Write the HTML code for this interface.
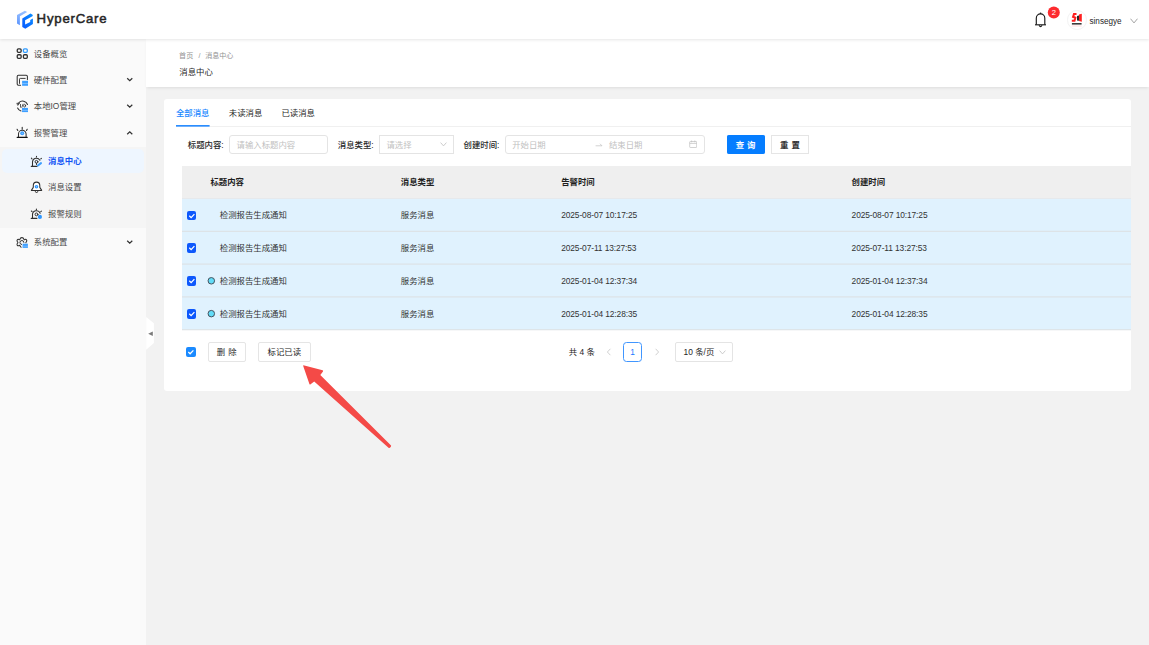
<!DOCTYPE html>
<html lang="zh-CN">
<head>
<meta charset="utf-8">
<title>消息中心 - HyperCare</title>
<style>
*{box-sizing:border-box;margin:0;padding:0}
html,body{width:1149px;height:645px;overflow:hidden}
body{position:relative;background:#f2f2f2;font-family:"Liberation Sans","Noto Sans CJK SC",sans-serif;font-size:8.4px;color:#262626;-webkit-font-smoothing:antialiased}
.abs{position:absolute}
.t{position:absolute;white-space:nowrap;line-height:12px;height:12px}
/* header */
#hdr{left:0;top:0;width:1149px;height:39px;background:#fff;box-shadow:0 1px 3px rgba(0,0,0,.1);z-index:5}
#brand{left:36.6px;top:9.9px;font-size:13.2px;font-weight:400;-webkit-text-stroke:.5px #262626;line-height:18px;height:18px;letter-spacing:.78px;color:#262626}
/* sidebar */
#side{left:0;top:39px;width:146px;height:606px;background:#fafafa}
#sub{left:0;top:147px;width:146px;height:81px;background:#f5f5f5}
#sel{left:2.4px;top:149.2px;width:141.4px;height:24.3px;background:#eef6ff;border-radius:5px}
.mi{color:#484848}
.chev{position:absolute;width:8px;height:8px}
/* page header */
#ph{left:146px;top:39px;width:1003px;height:48px;background:#fff;box-shadow:0 2px 3px -1px rgba(0,0,0,.09)}
/* card */
#card{left:164px;top:99px;width:967px;height:292px;background:#fff;border-radius:3px}
.inp{position:absolute;border:1px solid #e4e4e4;background:#fff;height:18.6px;top:135.2px}
.ph{color:#bfbfbf}
.lbl{color:#262626;font-weight:500}
.btn{position:absolute;border:1px solid #e5e5e5;background:#fff;height:19.4px;text-align:center;line-height:18.8px;color:#262626}
/* table */
#th{left:182px;top:166px;width:949px;height:32.5px;background:#efefef}
.th{font-weight:700;color:#1f1f1f}
.row{position:absolute;left:182px;width:949px;height:32.85px;background:#e0f2fe;border-bottom:1px solid #e3e6e8}
.cb{position:absolute;width:9.6px;height:9.6px;border-radius:2px;background:#0d58fc}
.cb svg{position:absolute;left:0;top:0;width:100%;height:100%}
.dot{position:absolute;width:7.6px;height:7.6px;border-radius:50%;background:#62d9f5;border:1px solid #4a5560}
.td{color:#333}
</style>
</head>
<body>

<!-- HEADER -->
<div id="hdr" class="abs">
  <svg class="abs" style="left:0;top:0" width="40" height="40" viewBox="0 0 40 40">
    <defs>
      <linearGradient id="lg1" x1="0" y1="0" x2="0" y2="1"><stop offset="0" stop-color="#9cc2ff"/><stop offset="1" stop-color="#5a94ff"/></linearGradient>
      <linearGradient id="lg2" x1="1" y1="0" x2="0" y2="1"><stop offset="0" stop-color="#0a90ff"/><stop offset="1" stop-color="#0a58ff"/></linearGradient>
    </defs>
    <path d="M17 15 L24.9 10.7 L27.2 12 L19.9 16.2 L19.9 25.2 L17 23.6 Z" fill="url(#lg1)"/>
    <path d="M22.3 18.5 L30.5 13.4 L32.9 14.9 L32.4 16.2 L25.1 20.2 L25.1 24.5 L30.2 22 L30.2 19.9 L32.9 18.5 L32.9 24.1 L25.3 28.7 L22.3 26.9 Z" fill="url(#lg2)"/>
  </svg>
  <div id="brand" class="t">HyperCare</div>

  <!-- bell -->
  <svg class="abs" style="left:1030px;top:8px" width="20" height="22" viewBox="1030 8 20 22" fill="none" stroke="#1c1c1c" stroke-width="1.15">
    <path d="M1036.3 24.8 L1036.3 18.2 A4.25 4.3 0 0 1 1044.8 18.2 L1044.8 24.8"/>
    <path d="M1035 24.8 L1046 24.8"/>
    <path d="M1040.55 12.6 L1040.55 14" stroke-width="1.3"/>
    <path d="M1039 25.2 Q1040.55 28 1042.1 25.2" stroke-width="1.05"/>
  </svg>
  <svg class="abs" style="left:1046px;top:4px" width="16" height="16" viewBox="1046 4 16 16">
    <circle cx="1053.8" cy="12.4" r="6" fill="#fd2b2f"/>
    <text x="1053.8" y="15.1" text-anchor="middle" font-family="Liberation Sans, sans-serif" font-size="7.6" fill="#fff">2</text>
  </svg>
  <!-- avatar -->
  <div class="abs" style="left:1067.2px;top:10.2px;width:19.4px;height:19.4px;border-radius:50%;background:#fff;border:.6px solid #f3f3f3"></div>
  <svg class="abs" style="left:1064px;top:6px" width="28" height="28" viewBox="1064 6 28 28">
    <path d="M1076.5 14 L1074 14 L1073.1 16.8 L1075.3 17.7 L1074.5 20.7 L1071.8 20.7" fill="none" stroke="#ff1f1f" stroke-width="2.1" stroke-linejoin="miter"/>
    <path d="M1077 16 L1079 15.6 L1079 20.8 L1077 20.4 Z" fill="#2a2a2a"/>
    <path d="M1079 14.4 L1081.8 13.8 L1081.8 21.8 L1079 21 Z" fill="#ff1f1f"/>
    <rect x="1071.9" y="23" width="9.7" height="1.6" fill="#3a3a3a"/>
    <rect x="1071.7" y="25.5" width="10" height="1" fill="#ff1f1f" opacity=".16"/>
  </svg>
  <div class="t" style="left:1089.5px;top:16px;font-size:8.15px;color:#262626">sinsegye</div>
  <svg class="abs" style="left:1130px;top:17.9px" width="8" height="6" viewBox="0 0 8 6"><path d="M.5 .7 L4 4.9 L7.5 .7" fill="none" stroke="#8c8c8c" stroke-width=".8"/></svg>
</div>

<!-- SIDEBAR -->
<div id="side" class="abs"></div>
<div id="sub" class="abs"></div>
<div id="sel" class="abs"></div>

<!-- menu icons -->
<!-- 设备概览 -->
<div class="t mi" style="left:33.8px;top:47.6px">设备概览</div>

<!-- 硬件配置 -->
<div class="t mi" style="left:33.8px;top:74px">硬件配置</div>

<!-- 本地IO管理 -->
<div class="t mi" style="left:33.8px;top:100.2px">本地IO管理</div>

<!-- 报警管理 -->
<div class="t mi" style="left:33.8px;top:126.7px">报警管理</div>

<!-- 消息中心 (selected) -->
<div class="t" style="left:48.1px;top:155.1px;color:#1456f5;font-weight:700">消息中心</div>

<!-- 消息设置 -->
<div class="t mi" style="left:48.1px;top:181.3px">消息设置</div>

<!-- 报警规则 -->
<div class="t mi" style="left:48.1px;top:207.5px">报警规则</div>

<!-- 系统配置 -->
<div class="t mi" style="left:33.8px;top:236.4px">系统配置</div>

<svg class="abs" style="left:0;top:40px" width="146" height="220" viewBox="0 40 146 220" fill="none" stroke="#303030" stroke-width="1.05" stroke-linecap="round" stroke-linejoin="round">
  <!-- 设备概览 -->
  <g stroke-width="1.3" stroke-linecap="butt">
    <rect x="17.25" y="48.85" width="3.9" height="3.6" rx="1.1"/>
    <rect x="23.4" y="48.85" width="3.9" height="3.6" rx="1.1" stroke="#2f9bff"/>
    <rect x="17.25" y="54.75" width="3.9" height="3.6" rx="1.1"/>
    <rect x="23.4" y="54.75" width="3.9" height="3.6" rx="1.1"/>
  </g>
  <!-- 硬件配置 -->
  <path d="M20.6 85.2 L18.4 85.2 Q17.2 85.2 17.2 84 L17.2 76.5 Q17.2 75.3 18.4 75.3 L26.2 75.3 Q27.4 75.3 27.4 76.5 L27.4 79.6"/>
  <path d="M25.2 78.4 L20.3 78.4 Q19.5 78.4 19.5 79.2 L19.5 83.4" stroke-width=".95"/>
  <rect x="22.1" y="80.8" width="5.9" height="5" fill="#3d9fff" stroke="none"/>
  <path d="M22.1 83.5 L28 83.5" stroke="#a9d3ff" stroke-width=".55" stroke-linecap="butt"/>
  <!-- 本地IO管理 -->
  <path d="M18.9 102.6 A5.2 5.2 0 0 1 27.5 104.5"/>
  <path d="M17.6 108 A5.2 5.2 0 0 0 21 110.9"/>
  <path d="M17.1 103.2 L19.6 103.2 L18 105.2 Z" fill="#2b2b2b" stroke-width=".6"/>
  <path d="M20.5 104.4 L20.5 107.2 M21.8 107.4 L23 104.2" stroke-width=".8"/>
  <ellipse cx="24.6" cy="105.7" rx="1" ry="1.4" stroke-width=".8"/>
  <rect x="22" y="107.9" width="6" height="4.2" fill="#3d9fff" stroke="none"/>
  <path d="M22 110.4 L28 110.4" stroke="#a9d3ff" stroke-width=".55" stroke-linecap="butt"/>
  <!-- 报警管理 -->
  <path d="M22.2 127.3 L22.2 129.2 M17.1 129.3 L17.8 130.5 M27.2 129.3 L26.5 130.5" stroke-width="1.1"/>
  <path d="M18.5 137 L18.5 134 A3.8 3.8 0 0 1 26.1 134 L26.1 137"/>
  <path d="M17.2 137.3 L27.2 137.3" stroke="#111" stroke-width="1.3"/>
  <circle cx="22.2" cy="133.3" r="2" fill="#3d9fff" stroke="none"/>
  <circle cx="22.2" cy="133.3" r=".5" fill="#bfe0ff" stroke="none"/>
  <!-- 消息中心 -->
  <path d="M36.5 156.4 L36.5 156.9 M31.4 158.2 L32 158.8 M41.4 158.3 L40.8 158.9" stroke-width="1.1"/>
  <path d="M32.5 166 L32.5 161.8 A4 4 0 0 1 39.9 160.2"/>
  <path d="M31.3 166.3 L37 166.3" stroke-width="1.25"/>
  <circle cx="36.5" cy="161.8" r="1.4" stroke-width="1"/>
  <path d="M36.5 163.2 L36.5 164.6" stroke-width=".9"/>
  <path d="M37.9 165.5 L41 163.1" stroke="#3d9fff" stroke-width="2"/>
  <!-- 消息设置 -->
  <path d="M33.2 190.3 L33.2 185.6 A3.3 3.5 0 0 1 39.8 185.6 L39.8 190.3 Z" fill="#fff" stroke="none"/>
  <path d="M31.4 190.4 L33.3 187.4 L33.3 185.6 A3.25 3.5 0 0 1 39.8 185.6 L39.8 187.4 L41.7 190.4 Z"/>
  <path d="M35.4 191 L35.4 191.6 Q35.4 192.5 36.55 192.5 Q37.7 192.5 37.7 191.6 L37.7 191" stroke-width="1"/>
  <circle cx="36.5" cy="186.7" r="1.8" fill="#2f97ff" stroke="none"/>
  <circle cx="36.5" cy="186.7" r=".5" fill="#d6ebff" stroke="none"/>
  <!-- 报警规则 -->
  <path d="M36.4 209.1 L36.4 209.8 M31.4 211 L32 211.5 M41.4 211.1 L40.8 211.6" stroke-width="1.1"/>
  <path d="M32.5 218 L32.5 214.8 A4 4 0 0 1 40.2 213.2"/>
  <path d="M31.3 218.4 L36.8 218.4" stroke-width="1.25"/>
  <circle cx="36.5" cy="214.4" r="1.4" stroke-width="1"/>
  <circle cx="39.9" cy="216.9" r="2.1" fill="#2f97ff" stroke="none"/>
  <!-- 系统配置 -->
  <path d="M21.2 247.2 Q20.2 246.9 20 245.9 Q19.8 245 18.9 245.6 Q17.9 246.2 17.2 245.1 Q16.6 244.1 17.5 243.4 Q18.3 242.6 17.5 241.8 Q16.6 241.1 17.2 240 Q17.9 238.9 18.9 239.5 Q19.8 240 20 239.1 Q20.3 237.6 21.9 237.6 Q23.5 237.6 23.8 239.1 Q24 240 24.9 239.5 Q25.9 238.9 26.6 240 Q27.2 241.1 26.3 241.8 Q25.8 242.3 25.9 242.8"/>
  <path d="M21.6 244.5 A2 2 0 1 1 23.9 242.4" stroke-width="1"/>
  <rect x="22.6" y="243.7" width="5.3" height="4.2" fill="#3d9fff" stroke="none"/>
  <path d="M22.6 246.2 L27.9 246.2" stroke="#a9d3ff" stroke-width=".55" stroke-linecap="butt"/>
  <!-- chevrons -->
  <g stroke="#333" stroke-width="1.25" stroke-linecap="butt" stroke-linejoin="miter">
    <path d="M127.2 78.2 L129.75 80.6 L132.3 78.2"/>
    <path d="M127.2 104.7 L129.75 107.1 L132.3 104.7"/>
    <path d="M127.2 134.2 L129.75 131.8 L132.3 134.2"/>
    <path d="M127.2 240.7 L129.75 243.1 L132.3 240.7"/>
  </g>
</svg>
<!-- collapse handle -->
<svg class="abs" style="left:146px;top:316px;z-index:3" width="9" height="35" viewBox="146 316 9 35">
  <path d="M146.2 316.9 L153.9 323.3 L153.9 343 L146.2 349.8 Z" fill="#fff"/>
  <path d="M152.8 331.4 L148.2 333.8 L152.8 336.1 Z" fill="#7a7a7a"/>
</svg>

<!-- PAGE HEADER -->
<div id="ph" class="abs"></div>
<div class="t" style="left:179.1px;top:50.2px;font-size:7.05px;color:#939393">首页<span style="margin:0 4.6px 0 5.4px">/</span>消息中心</div>
<div class="t" style="left:179.3px;top:65.5px;font-size:8.4px;color:#1f1f1f">消息中心</div>

<!-- CARD -->
<div id="card" class="abs"></div>
<!-- tabs -->
<div class="abs" style="left:176px;top:126.4px;width:955px;height:1px;background:#f0f0f0"></div>
<div class="t" style="left:176px;top:107px;color:#2087ff;font-weight:500">全部消息</div>
<div class="t" style="left:228.8px;top:107px;color:#1f1f1f">未读消息</div>
<div class="t" style="left:281.4px;top:107px;color:#1f1f1f">已读消息</div>
<svg class="abs" style="left:176px;top:124px" width="34" height="4" viewBox="0 0 34 4"><rect x="0" y="1" width="33.6" height="1.65" fill="#2a8dff"/></svg>

<!-- filters -->
<div class="t lbl" style="left:187.8px;top:138.5px">标题内容:</div>
<div class="inp" style="left:229.3px;width:98.4px;border-radius:3px"></div>
<div class="t ph" style="left:236.6px;top:138.5px">请输入标题内容</div>

<div class="t lbl" style="left:337.8px;top:138.5px">消息类型:</div>
<div class="inp" style="left:379.2px;width:74.4px"></div>
<div class="t ph" style="left:386.4px;top:138.5px">请选择</div>
<svg class="abs" style="left:440px;top:142px" width="7" height="5" viewBox="0 0 7 5"><path d="M.6 .6 L3.5 3.9 L6.4 .6" fill="none" stroke="#bfbfbf" stroke-width=".8"/></svg>

<div class="t lbl" style="left:463.6px;top:138.5px">创建时间:</div>
<div class="inp" style="left:504.5px;width:200px;border-radius:3px"></div>
<div class="t ph" style="left:512.2px;top:138.5px">开始日期</div>
<svg class="abs" style="left:595px;top:141.5px" width="8" height="6" viewBox="0 0 8 6"><path d="M.6 3.8 L7 3.8 L5 1.8" fill="none" stroke="#bfbfbf" stroke-width=".7"/></svg>
<div class="t ph" style="left:609px;top:138.5px">结束日期</div>
<svg class="abs" style="left:688.8px;top:140.4px" width="8.4" height="8.4" viewBox="0 0 8.4 8.4" fill="none" stroke="#bfbfbf" stroke-width=".7"><rect x=".7" y="1.5" width="7" height="6" rx=".6"/><path d="M.7 3.4 L7.7 3.4 M2.6 .5 L2.6 2.3 M5.8 .5 L5.8 2.3"/></svg>

<div class="btn" style="left:726.5px;top:135px;width:38.3px;height:19px;border-radius:1.2px;background:#057dff;border-color:#057dff;color:#fff;font-weight:700;letter-spacing:.3px;padding-left:.3px">查 询</div>
<div class="btn" style="left:771px;top:135px;width:37.9px;height:19px;font-weight:700;letter-spacing:.3px;padding-left:.3px;color:#333">重 置</div>

<!-- table header -->
<svg class="abs" style="left:182px;top:166px" width="949" height="165" viewBox="182 166 949 165" shape-rendering="geometricPrecision">
  <rect x="182" y="166" width="949" height="32.5" fill="#efefef"/>
  <rect x="182" y="198.5" width="949" height="131.3" fill="#e0f2fe"/>
  <g fill="#dcdfe2">
    <rect x="182" y="198" width="949" height=".9" fill="#e6e8ea"/>
    <rect x="182" y="230.8" width="949" height="1"/>
    <rect x="182" y="263.6" width="949" height="1"/>
    <rect x="182" y="296.4" width="949" height="1"/>
    <rect x="182" y="329.25" width="949" height="1"/>
  </g>
</svg>
<div class="t th" style="left:210.4px;top:176px">标题内容</div>
<div class="t th" style="left:400.8px;top:176px">消息类型</div>
<div class="t th" style="left:561.2px;top:176px">告警时间</div>
<div class="t th" style="left:851.6px;top:176px">创建时间</div>

<!-- rows -->
<div class="cb" style="left:186.6px;top:210.50px"><svg viewBox="0 0 10 10"><path d="M2.4 5 L4.3 6.9 L7.7 3.3" fill="none" stroke="#fff" stroke-width="1.3"/></svg></div>
<div class="t td" style="left:219.8px;top:209.10px">检测报告生成通知</div>
<div class="t td" style="left:400.8px;top:209.10px">服务消息</div>
<div class="t td" style="left:561.2px;top:209.40px;font-size:8.4px;letter-spacing:-.1px">2025-08-07 10:17:25</div>
<div class="t td" style="left:851.6px;top:209.40px;font-size:8.4px;letter-spacing:-.1px">2025-08-07 10:17:25</div>
<div class="cb" style="left:186.6px;top:243.35px"><svg viewBox="0 0 10 10"><path d="M2.4 5 L4.3 6.9 L7.7 3.3" fill="none" stroke="#fff" stroke-width="1.3"/></svg></div>
<div class="t td" style="left:219.8px;top:241.95px">检测报告生成通知</div>
<div class="t td" style="left:400.8px;top:241.95px">服务消息</div>
<div class="t td" style="left:561.2px;top:242.25px;font-size:8.4px;letter-spacing:-.1px">2025-07-11 13:27:53</div>
<div class="t td" style="left:851.6px;top:242.25px;font-size:8.4px;letter-spacing:-.1px">2025-07-11 13:27:53</div>
<div class="cb" style="left:186.6px;top:276.20px"><svg viewBox="0 0 10 10"><path d="M2.4 5 L4.3 6.9 L7.7 3.3" fill="none" stroke="#fff" stroke-width="1.3"/></svg></div>
<svg class="abs" style="left:205.0px;top:274.0px" width="12" height="12" viewBox="0 0 12 12"><circle cx="6.30" cy="6.80" r="3.25" fill="#62dcf8" stroke="#46525e" stroke-width="1"/></svg>
<div class="t td" style="left:219.8px;top:274.80px">检测报告生成通知</div>
<div class="t td" style="left:400.8px;top:274.80px">服务消息</div>
<div class="t td" style="left:561.2px;top:275.10px;font-size:8.4px;letter-spacing:-.1px">2025-01-04 12:37:34</div>
<div class="t td" style="left:851.6px;top:275.10px;font-size:8.4px;letter-spacing:-.1px">2025-01-04 12:37:34</div>
<div class="cb" style="left:186.6px;top:309.05px"><svg viewBox="0 0 10 10"><path d="M2.4 5 L4.3 6.9 L7.7 3.3" fill="none" stroke="#fff" stroke-width="1.3"/></svg></div>
<svg class="abs" style="left:205.0px;top:307.0px" width="12" height="12" viewBox="0 0 12 12"><circle cx="6.30" cy="6.65" r="3.25" fill="#62dcf8" stroke="#46525e" stroke-width="1"/></svg>
<div class="t td" style="left:219.8px;top:307.65px">检测报告生成通知</div>
<div class="t td" style="left:400.8px;top:307.65px">服务消息</div>
<div class="t td" style="left:561.2px;top:307.95px;font-size:8.4px;letter-spacing:-.1px">2025-01-04 12:28:35</div>
<div class="t td" style="left:851.6px;top:307.95px;font-size:8.4px;letter-spacing:-.1px">2025-01-04 12:28:35</div>

<!-- footer -->
<div class="cb" style="left:186.2px;top:347.2px;height:9.9px;background:#1a8aff"><svg viewBox="0 0 10 10"><path d="M2.4 5 L4.3 6.9 L7.7 3.3" fill="none" stroke="#fff" stroke-width="1.3"/></svg></div>
<div class="btn" style="left:207.6px;top:342.2px;width:38.2px;border-radius:2px;letter-spacing:.3px;padding-left:.3px">删 除</div>
<div class="btn" style="left:258px;top:342.2px;width:52.6px;border-radius:2px">标记已读</div>

<div class="t" style="left:568.8px;top:345.6px;color:#262626">共 4 条</div>
<svg class="abs" style="left:606px;top:348px" width="6" height="8" viewBox="0 0 6 8"><path d="M4.4 .8 L1.4 4 L4.4 7.2" fill="none" stroke="#c4c4c4" stroke-width=".8"/></svg>
<div class="abs" style="left:623px;top:342.2px;width:19px;height:19.4px;border:1px solid #4096ff;border-radius:3.5px;background:#fff;color:#1677ff;text-align:center;line-height:18.4px;font-size:8.3px">1</div>
<svg class="abs" style="left:653.6px;top:348px" width="6" height="8" viewBox="0 0 6 8"><path d="M1.6 .8 L4.6 4 L1.6 7.2" fill="none" stroke="#c4c4c4" stroke-width=".8"/></svg>
<div class="abs" style="left:675.4px;top:342.2px;width:57.2px;height:19.4px;border:1px solid #e4e4e4;border-radius:2px;background:#fff"></div>
<div class="t" style="left:683.6px;top:345.6px;color:#262626">10 条/页</div>
<svg class="abs" style="left:719px;top:349.6px" width="7" height="5" viewBox="0 0 7 5"><path d="M.6 .6 L3.5 3.9 L6.4 .6" fill="none" stroke="#bfbfbf" stroke-width=".8"/></svg>

<!-- red annotation arrow -->
<svg class="abs" style="left:290px;top:355px;z-index:9" width="120" height="100" viewBox="290 355 120 100">
  <path d="M303.4 365.3 Q303 365.3 303.3 366.2 L309.4 384 Q309.9 385 310.6 384.3 L314.2 381.6 L388.8 447.9 Q389.6 448.4 390.2 447.6 L391 446.4 Q391.4 445.8 390.8 445.2 L320.3 374.9 L323 371.6 Q323.5 370.6 322.6 370.3 Z" fill="#f44a47"/>
</svg>

</body>
</html>
